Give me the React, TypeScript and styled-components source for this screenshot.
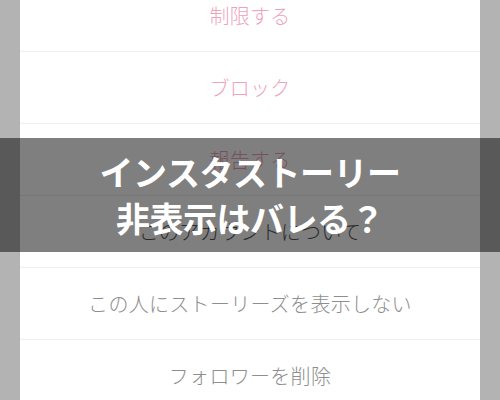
import React from "react";
import styled, { createGlobalStyle } from "styled-components";

const Global = createGlobalStyle`
  html, body {
    margin: 0;
    padding: 0;
    background: #b3b3b3;
    overflow: hidden;
  }
  body {
    font-family: "Noto Sans CJK JP", "Noto Sans", sans-serif;
  }
`;

const Screen = styled.div`
  position: relative;
  width: 500px;
  height: 400px;
  overflow: hidden;
  background: #b3b3b3;
`;

const Sheet = styled.ul`
  list-style: none;
  margin: -20px 20px 0;
  padding: 0;
  background: #ffffff;
  display: flex;
  flex-direction: column;
`;

type Tone = "danger" | "plain" | "muted";

const toneColor: Record<Tone, string> = {
  danger: "#eda3bb",
  plain: "#555555",
  muted: "#8e8e8e",
};

const Item = styled.li<{ $tone: Tone }>`
  box-sizing: border-box;
  height: 72px;
  display: flex;
  align-items: center;
  justify-content: center;
  border-bottom: 1px solid #efefef;
  font-size: 20px;
  font-weight: 300;
  letter-spacing: 0.3px;
  color: ${(p) => toneColor[p.$tone]};
`;

const Banner = styled.div`
  position: absolute;
  left: 0;
  right: 0;
  top: 138px;
  height: 114px;
  background: rgba(0, 0, 0, 0.5);
  display: flex;
  align-items: center;
  justify-content: center;
`;

const Title = styled.h1`
  margin: 0;
  color: #ffffff;
  font-family: "Noto Sans CJK JP", sans-serif;
  font-weight: 700;
  font-size: 34px;
  line-height: 46px;
  text-align: center;
  letter-spacing: -0.5px;
`;

const items: { label: string; tone: Tone }[] = [
  { label: "制限する", tone: "danger" },
  { label: "ブロック", tone: "danger" },
  { label: "報告する", tone: "danger" },
  { label: "このアカウントについて", tone: "plain" },
  { label: "この人にストーリーズを表示しない", tone: "muted" },
  { label: "フォロワーを削除", tone: "muted" },
];

export default function App() {
  return (
    <Screen>
      <Global />
      <Sheet>
        {items.map((it) => (
          <Item key={it.label} $tone={it.tone}>
            {it.label}
          </Item>
        ))}
      </Sheet>
      <Banner>
        <Title>
          インスタストーリー
          <br />
          非表示はバレる？
        </Title>
      </Banner>
    </Screen>
  );
}
